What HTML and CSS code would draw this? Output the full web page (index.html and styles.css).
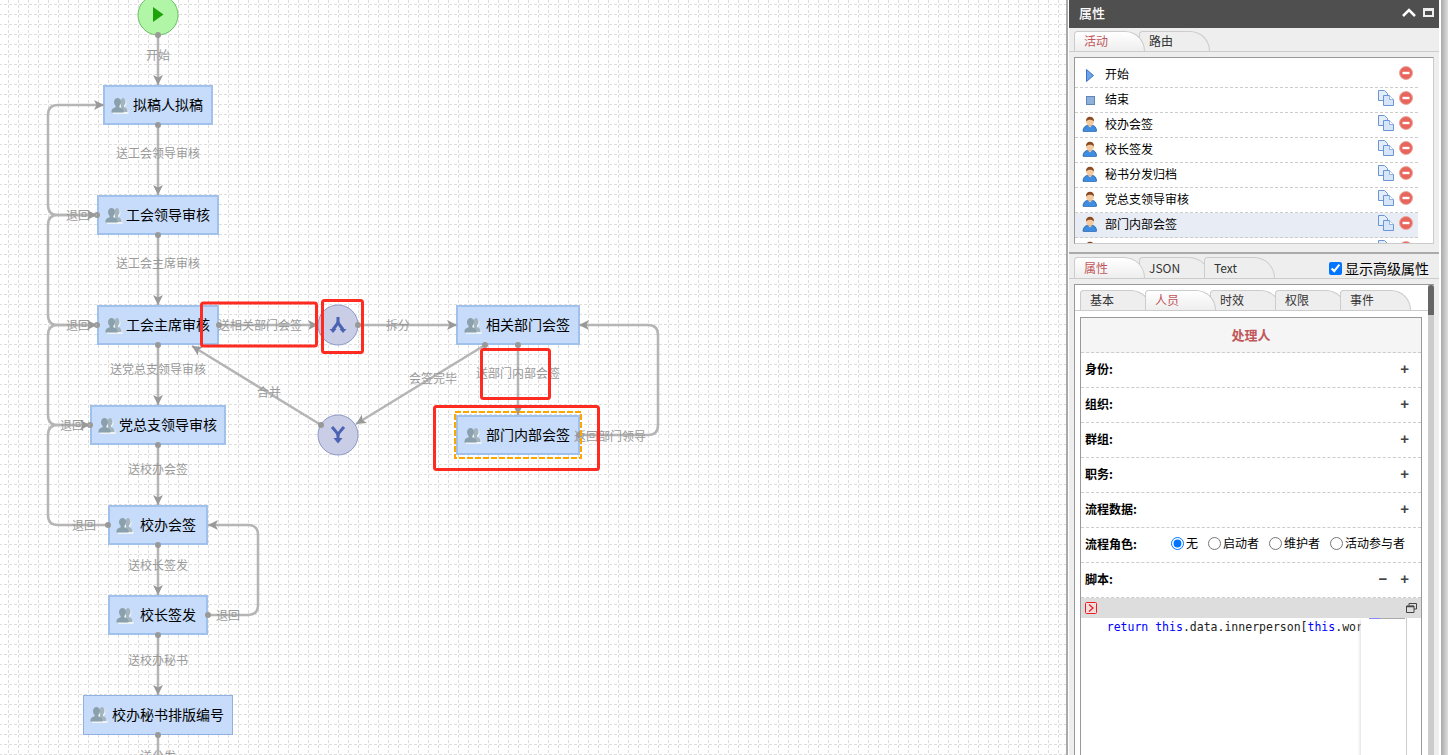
FILE: index.html
```html
<!DOCTYPE html>
<html lang="zh-CN">
<head>
<meta charset="utf-8">
<title>流程设计</title>
<link rel="stylesheet" href="styles.css">
</head>
<body>
<svg class="defs" width="0" height="0">
  <defs>
    <symbol id="group" viewBox="0 0 18 18">
      <path fill="#eef3f5" d="M12.500 2c1.800 0 3 1.700 3 3.800 0 1.600-.7 3-1.500 3.800v1.400c1.500.6 3.500 1.400 3.500 3.500v2.500H2v-2z"/>
      <path fill="#a3b4be" d="M11.500 1c1.800 0 3 1.700 3 3.800 0 1.600-.7 3-1.500 3.800v1.400c1.500.6 3.500 1.400 3.500 3.500v1.500h-6l-1-12z"/>
      <path fill="#8aa0ac" d="M6.500 1C8.500 1 10 2.800 10 5c0 1.700-.8 3.100-1.700 3.900v1.300c1.800.6 4.200 1.500 4.200 3.800v1.500H.5V14c0-2.300 2.400-3.200 4.200-3.800V8.900C3.800 8.100 3 6.700 3 5c0-2.200 1.500-4 3.500-4z"/>
    </symbol>
    <symbol id="person" viewBox="0 0 16 16">
      <path fill="#3f8de0" stroke="#2a5fa8" stroke-width=".8" d="M1 15c0-3.500 2.500-5.500 4.500-5.500h5c2 0 4 2 4 5.500 0 .6-1 .8-2 .8H3c-1 0-2-.2-2-.8z"/>
      <ellipse cx="8" cy="5.500" rx="3.800" ry="4.200" fill="#f3c9a0"/>
      <path fill="#8a4a22" d="M4 5.500C3.800 2.500 5.500.8 8 .8s4.200 1.700 4 4.700c-.8-1.300-2.500-1.800-4-1.800s-3.200.5-4 1.800z"/>
      <path fill="#f3c9a0" d="M5.800 9.500h4.400L8 11.500z"/>
    </symbol>
    <symbol id="copy" viewBox="0 0 16 16">
      <path fill="#e4eefb" stroke="#6b96d6" d="M.5.500h6l3 3v7h-9z"/>
      <path fill="#d6e5f8" stroke="#6b96d6" d="M5.500 5.500h6l4 4v6h-10z"/>
      <path fill="#fff" stroke="#6b96d6" stroke-width=".7" d="M11.500 5.500v4h4"/>
    </symbol>
    <symbol id="del" viewBox="0 0 14 14">
      <circle cx="7" cy="7" r="6.500" fill="#e8655c" stroke="#eba79f"/>
      <rect x="3.500" y="5.800" width="7" height="2.400" fill="#fff"/>
    </symbol>
    <marker id="arrow" viewBox="0 0 10 10" refX="10" refY="5" markerWidth="10" markerHeight="10" markerUnits="userSpaceOnUse" orient="auto">
      <path d="M10 5 0 0l2.500 5L0 10z" fill="#999"/>
    </marker>
    <marker id="dot" viewBox="0 0 6 6" refX="3" refY="3" markerWidth="6" markerHeight="6" markerUnits="userSpaceOnUse">
      <circle cx="3" cy="3" r="3" fill="#999"/>
    </marker>
    <pattern id="grid" width="10" height="10" patternUnits="userSpaceOnUse">
      <path d="M0 4.500h2M4 4.500h3M9 4.500h1M8.500 0v3M8.500 5v3" stroke="#ddd" stroke-width="1" fill="none"/>
    </pattern>
  </defs>
</svg>
<div class="page">
  <main class="canvas">
    <svg class="grid-layer" width="1066" height="755"><rect width="1066" height="755" fill="url(#grid)"/></svg>

    <div class="node n-draft"><svg class="node-icon"><use href="#group"/></svg>拟稿人拟稿</div>
    <div class="node n-lead"><svg class="node-icon"><use href="#group"/></svg>工会领导审核</div>
    <div class="node n-chair"><svg class="node-icon"><use href="#group"/></svg>工会主席审核</div>
    <div class="node n-party"><svg class="node-icon"><use href="#group"/></svg>党总支领导审核</div>
    <div class="node n-office"><svg class="node-icon"><use href="#group"/></svg>校办会签</div>
    <div class="node n-head"><svg class="node-icon"><use href="#group"/></svg>校长签发</div>
    <div class="node n-sec"><svg class="node-icon"><use href="#group"/></svg>校办秘书排版编号</div>
    <div class="node n-rel"><svg class="node-icon"><use href="#group"/></svg>相关部门会签</div>
    <div class="node n-inner"><svg class="node-icon"><use href="#group"/></svg>部门内部会签</div>

    <svg class="overlay" width="1066" height="755">
      <circle cx="158" cy="15" r="20" fill="#b1f5a6" stroke="#6cc068"/>
      <path d="M153 7l10.500 7.500L153 22z" fill="#1fa30a"/>
      <circle cx="338" cy="325" r="20" fill="#c9cde5" stroke="#8f99c9"/>
      <circle cx="338" cy="435" r="20" fill="#c9cde5" stroke="#8f99c9"/>
      <g fill="none" stroke="#4b63b2" stroke-width="3">
        <path d="M338 317v4q0 2-2 4.500l-3 4M338 321q0 2 2 4.500l3 4"/>
        <path d="M332 427l3.500 4q2.500 2.500 2.500 5v3M344 427l-3.500 4q-2.500 2.500-2.500 5v3"/>
      </g>
      <path d="M329.500 329h7l-3.500 4zM339.500 329h7l-3.500 4z" fill="#4b63b2"/>
      <path d="M333.500 438h9l-4.500 5.500z" fill="#4b63b2"/>

      <g class="edges" marker-start="url(#dot)" marker-end="url(#arrow)">
        <path d="M158 35V85"/>
        <path d="M158 125V195"/>
        <path d="M158 235V305"/>
        <path d="M158 345V405"/>
        <path d="M158 445V505"/>
        <path d="M158 545V595"/>
        <path d="M158 635V695"/>
        <path d="M97 215H58Q48 215 48 205V115Q48 105 58 105H104"/>
        <path d="M97 325H58Q48 325 48 315V225Q48 215 58 215H97"/>
        <path d="M90 425H58Q48 425 48 415V335Q48 325 58 325H97"/>
        <path d="M108 525H58Q48 525 48 515V435Q48 425 58 425H90"/>
        <path d="M208 615H248Q258 615 258 605V535Q258 525 248 525H208"/>
        <path d="M219 325H318"/>
        <path d="M358 325H457"/>
        <path d="M321 425 192 346"/>
        <path d="M485 345 356 424"/>
        <path d="M518 345V415"/>
        <path d="M579 435H648Q658 435 658 425V335Q658 325 648 325H579"/>
      </g>
      <path class="edge-tail" d="M158 735V755"/>
      <circle cx="158" cy="735" r="3" fill="#999"/>

      <g class="labels">
        <text x="158" y="60">开始</text>
        <text x="158" y="158">送工会领导审核</text>
        <text x="158" y="268">送工会主席审核</text>
        <text x="158" y="374">送党总支领导审核</text>
        <text x="158" y="474">送校办会签</text>
        <text x="158" y="570">送校长签发</text>
        <text x="158" y="665">送校办秘书</text>
        <text x="158" y="761">送分发</text>
        <text x="78" y="220">退回</text>
        <text x="78" y="330">退回</text>
        <text x="72" y="430">退回</text>
        <text x="84" y="530">退回</text>
        <text x="228" y="620">退回</text>
        <text x="260" y="330">送相关部门会签</text>
        <text x="398" y="330">拆分</text>
        <text x="269" y="397">合并</text>
        <text x="433" y="383">会签完毕</text>
        <text x="518" y="378">送部门内部会签</text>
        <text x="610" y="441">返回部门领导</text>
      </g>

      <rect class="focus" x="455" y="412" width="126" height="46"/>
      <g class="mark">
        <rect x="201.500" y="303" width="115" height="43" rx="2"/>
        <rect x="322.500" y="300.500" width="40" height="52" rx="2"/>
        <rect x="481.500" y="349.500" width="68" height="49" rx="2"/>
        <rect x="434.500" y="406.500" width="164" height="63" rx="2"/>
      </g>
    </svg>
  </main>

  <div class="divider"></div>

  <aside class="panel">
    <header class="panel-head">
      <span class="panel-title">属性</span>
      <svg class="head-up" width="14" height="9" viewBox="0 0 14 9"><path d="M1 8l6-6 6 6" fill="none" stroke="#fff" stroke-width="2.500"/></svg>
      <span class="head-max"></span>
    </header>

    <section class="activities">
      <div class="tabs">
        <span class="tab active">活动</span>
        <span class="tab">路由</span>
      </div>
      <div class="list-box">
        <div class="row">
          <span class="row-icon"><svg width="8" height="13" viewBox="0 0 8 13"><path d="M.5.500l7 6-7 6z" fill="#6fa3e8" stroke="#3b74c8"/></svg></span>
          <span class="row-name">开始</span>
          <svg class="r-del"><use href="#del"/></svg>
        </div>
        <div class="row">
          <span class="row-icon"><svg width="9" height="9" viewBox="0 0 9 9"><rect x=".5" y=".5" width="8" height="8" fill="#8fb0d8" stroke="#5f86b8"/></svg></span>
          <span class="row-name">结束</span>
          <svg class="r-copy"><use href="#copy"/></svg><svg class="r-del"><use href="#del"/></svg>
        </div>
        <div class="row">
          <span class="row-icon"><svg class="r-person"><use href="#person"/></svg></span>
          <span class="row-name">校办会签</span>
          <svg class="r-copy"><use href="#copy"/></svg><svg class="r-del"><use href="#del"/></svg>
        </div>
        <div class="row">
          <span class="row-icon"><svg class="r-person"><use href="#person"/></svg></span>
          <span class="row-name">校长签发</span>
          <svg class="r-copy"><use href="#copy"/></svg><svg class="r-del"><use href="#del"/></svg>
        </div>
        <div class="row">
          <span class="row-icon"><svg class="r-person"><use href="#person"/></svg></span>
          <span class="row-name">秘书分发归档</span>
          <svg class="r-copy"><use href="#copy"/></svg><svg class="r-del"><use href="#del"/></svg>
        </div>
        <div class="row">
          <span class="row-icon"><svg class="r-person"><use href="#person"/></svg></span>
          <span class="row-name">党总支领导审核</span>
          <svg class="r-copy"><use href="#copy"/></svg><svg class="r-del"><use href="#del"/></svg>
        </div>
        <div class="row selected">
          <span class="row-icon"><svg class="r-person"><use href="#person"/></svg></span>
          <span class="row-name">部门内部会签</span>
          <svg class="r-copy"><use href="#copy"/></svg><svg class="r-del"><use href="#del"/></svg>
        </div>
        <div class="row">
          <span class="row-icon"><svg class="r-person"><use href="#person"/></svg></span>
          <span class="row-name"></span>
          <svg class="r-copy"><use href="#copy"/></svg><svg class="r-del"><use href="#del"/></svg>
        </div>
      </div>
    </section>

    <section class="props">
      <div class="tabs tabs-props">
        <span class="tab active">属性</span>
        <span class="tab">JSON</span>
        <span class="tab">Text</span>
        <label class="advanced"><input type="checkbox" checked>显示高级属性</label>
      </div>
      <div class="prop-box">
        <div class="prop-scroll">
          <div class="tabs tabs-inner">
            <span class="tab">基本</span>
            <span class="tab active">人员</span>
            <span class="tab">时效</span>
            <span class="tab">权限</span>
            <span class="tab">事件</span>
          </div>
          <div class="table">
            <div class="t-title">处理人</div>
            <div class="t-row"><b>身份:</b><span class="ops">+</span></div>
            <div class="t-row"><b>组织:</b><span class="ops">+</span></div>
            <div class="t-row"><b>群组:</b><span class="ops">+</span></div>
            <div class="t-row"><b>职务:</b><span class="ops">+</span></div>
            <div class="t-row"><b>流程数据:</b><span class="ops">+</span></div>
            <div class="t-row">
              <b class="role-label">流程角色:</b>
              <div class="roles">
                <label><input type="radio" name="role" checked>无</label>
                <label><input type="radio" name="role">启动者</label>
                <label><input type="radio" name="role">维护者</label>
                <label><input type="radio" name="role">活动参与者</label>
              </div>
            </div>
            <div class="t-row"><b>脚本:</b><span class="ops minus">−</span><span class="ops">+</span></div>
            <div class="script-bar">
              <svg width="12" height="12" viewBox="0 0 12 12"><rect x=".5" y=".5" width="11" height="11" rx="1" fill="#f6dcdc" stroke="#e82020"/><path d="M4 2.500L8 6l-4 3.500" fill="none" stroke="#e82020" stroke-width="1.300"/></svg>
              <svg class="restore" width="11" height="10" viewBox="0 0 11 10"><path d="M3 2.500V.5h7.500v5.500H8M.5 3h7.500v6.500H.5z" fill="none" stroke="#444"/><path d="M.5 3.500H8" stroke="#444" stroke-width="1.500"/></svg>
            </div>
            <div class="editor">
              <pre class="code">    <span class="kw">return</span> <span class="kw">this</span>.data.innerperson[<span class="kw">this</span>.wor</pre>
              <div class="minimap"><i></i></div>
              <div class="editor-side"></div>
            </div>
          </div>
        </div>
        <div class="scrollbar"><div class="thumb"></div></div>
      </div>
    </section>
  </aside>

  <div class="edge-shade"></div>
</div>
</body>
</html>
```
FILE: styles.css
```css
* { box-sizing: border-box; }
html, body { margin: 0; height: 755px; overflow: hidden; background: #fff; }
body { font: 12px "Noto Sans CJK SC", "Liberation Sans", sans-serif; color: #000; }
.defs { display: block; position: absolute; }

.page { display: flex; width: 1448px; height: 755px; overflow: hidden; }

/* canvas */
.canvas { position: relative; width: 1066px; height: 755px; flex: none; overflow: hidden; background: #fff; }
.grid-layer, .overlay { position: absolute; left: 0; top: 0; }
.overlay { pointer-events: none; }

.node {
  position: absolute; height: 40px; padding: 0 0 2px 20px;
  display: flex; align-items: center; justify-content: center;
  background: #c6dcfa; border: 2px solid #a0c1ec;
  font-size: 14px; line-height: 1; white-space: nowrap; color: #000;
}
.node-icon { position: absolute; left: 6px; top: 10px; width: 18px; height: 18px; }
.n-draft  { left: 103px; top: 85px;  width: 110px; }
.n-lead   { left: 97px;  top: 195px; width: 122px; }
.n-chair  { left: 97px;  top: 305px; width: 122px; }
.n-party  { left: 90px;  top: 405px; width: 136px; }
.n-office { left: 108px; top: 505px; width: 100px; }
.n-head   { left: 108px; top: 595px; width: 100px; }
.n-sec    { left: 83px;  top: 695px; width: 150px; border-color: #8fb0e0; border-width: 1px; }
.n-rel    { left: 456px; top: 305px; width: 124px; }
.n-inner  { left: 456px; top: 415px; width: 124px; }

.edges path, .edge-tail { fill: none; stroke: #b5b5b5; stroke-width: 2.5; }
.labels text { font-size: 12px; fill: #999; text-anchor: middle; }
.focus { fill: none; stroke: #ffa500; stroke-width: 2; stroke-dasharray: 6 2; }
.mark rect { fill: none; stroke: #ff2a20; stroke-width: 3; }

.divider { width: 3px; flex: none; background: linear-gradient(90deg, #aaa 0 2px, #fff 2px); }

/* panel */
.panel { width: 370px; height: 755px; flex: none; display: flex; flex-direction: column; background: #eee; }
.panel-head {
  height: 28px; flex: none; display: flex; align-items: center;
  background: #4f4f4f; color: #fff; padding: 0 5px 3px 10px;
}
.panel-title { font-size: 13px; font-weight: 500; flex: 1; margin-bottom: 1px; }
.head-up { margin-right: 7px; }
.head-max { width: 11px; height: 9px; border: 2px solid #eee; border-top-width: 3px; }

.activities { height: 224px; flex: none; margin-top: 2px; border-top: 1px solid #eee; }
.tabs { display: flex; align-items: flex-end; padding-left: 5px; border-bottom: 1px solid #ccc; }
.tab {
  position: relative; flex: none; width: 71px; height: 20px; margin-right: -6px;
  padding-left: 9px; line-height: 17px; font-size: 12px; color: #333;
  background: #eee; border: 1px solid #ccc; border-bottom: 0;
  border-radius: 4px 22px 0 0;
}
.tab.active { z-index: 2; color: #c0575a; background: linear-gradient(#fff, #eee); }

.list-box {
  margin: 5px 5px 0; height: 187px; overflow: hidden; padding-top: 5px; background: #fff;
  border: 1px solid #ccc; border-top-color: #999; border-left-color: #999;
}
.row {
  width: 343px; height: 25px; display: flex; align-items: center;
  border-bottom: 1px dashed #ccc; padding-right: 5px;
}
.row.selected { background: #e8ecf4; }
.row-icon { width: 30px; flex: none; display: flex; justify-content: center; }
.row-name { flex: 1; font-size: 12px; line-height: 1; margin-top: -2px; }
.r-person { width: 16px; height: 16px; margin-top: -3px; }
.r-copy { width: 16px; height: 16px; margin: -4px 5px 0 0; }
.r-del { width: 14px; height: 14px; margin-top: -4px; }

.props { flex: 1; min-height: 0; display: flex; flex-direction: column; border-top: 2px solid #aaa; margin-top: -2px; padding-top: 3px; }
.tabs-props .tab { height: 21px; line-height: 19px; }
.advanced {
  margin-left: auto; display: flex; align-items: center; gap: 3px;
  font-size: 14px; line-height: 1; color: #000; padding: 0 10px 3px 0;
}
.advanced input { margin: 0; width: 13px; height: 13px; }

.prop-box {
  flex: 1; min-height: 0; margin: 5px 5px 0; width: 360px; display: flex; background: #fff;
  border-top: 1px solid #999; border-left: 1px solid #999; overflow: hidden;
}
.prop-scroll { flex: 1; min-width: 0; }
.scrollbar { width: 6px; flex: none; background: #ccc; }
.thumb { height: 30px; background: #666; border-radius: 3px 3px 0 0; }

.tabs-inner { margin-top: 5px; }
.table {
  margin: 6px 0 0 5px; width: 342px; height: 500px;
  border: 1px solid #999; border-bottom: 0; display: flex; flex-direction: column;
}
.t-title {
  height: 35px; flex: none; display: flex; align-items: center; justify-content: center;
  background: #f5f5f5; border-bottom: 1px dashed #ccc; padding-bottom: 2px;
  font-size: 13px; font-weight: 700; color: #c0575a;
}
.t-row {
  height: 35px; flex: none; display: flex; align-items: center; gap: 13px;
  padding: 0 12px 4px 4px; border-bottom: 1px dashed #ccc; font-size: 12px;
}
.t-row b { flex: 1; }
.t-row b.role-label { flex: none; width: 73px; }
.ops { font: 700 15px/1 "Liberation Sans", sans-serif; color: #444; }
.roles { display: flex; gap: 10px; }
.roles label { display: flex; align-items: center; gap: 2px; line-height: 1; }
.roles input { margin: 0; width: 13px; height: 13px; }

.script-bar {
  height: 20px; flex: none; display: flex; align-items: center; justify-content: space-between;
  background: #ddd; padding: 0 4px;
}
.editor { flex: 1; display: flex; position: relative; background: #fff; min-height: 0; }
.code {
  margin: 0; width: 280px; flex: none; overflow: hidden; padding: 2px 0 0 0; text-indent: -2px;
  font: 11.5px/15px "DejaVu Sans Mono", monospace; color: #222;
}
.kw { color: #00f; }
.minimap { width: 46px; flex: none; background: #fff; box-shadow: -3px 0 3px -2px #ddd; border-right: 1px solid #ccc; }
.minimap i { display: block; margin: 0 1px 0 8px; height: 1px; background: linear-gradient(90deg, #88f 0 30%, #aaa 30%); }
.editor-side { flex: 1; }

.edge-shade { width: 9px; flex: none; background: linear-gradient(90deg, #fff 0 2px, #aaa 2px, #ddd); }
```
